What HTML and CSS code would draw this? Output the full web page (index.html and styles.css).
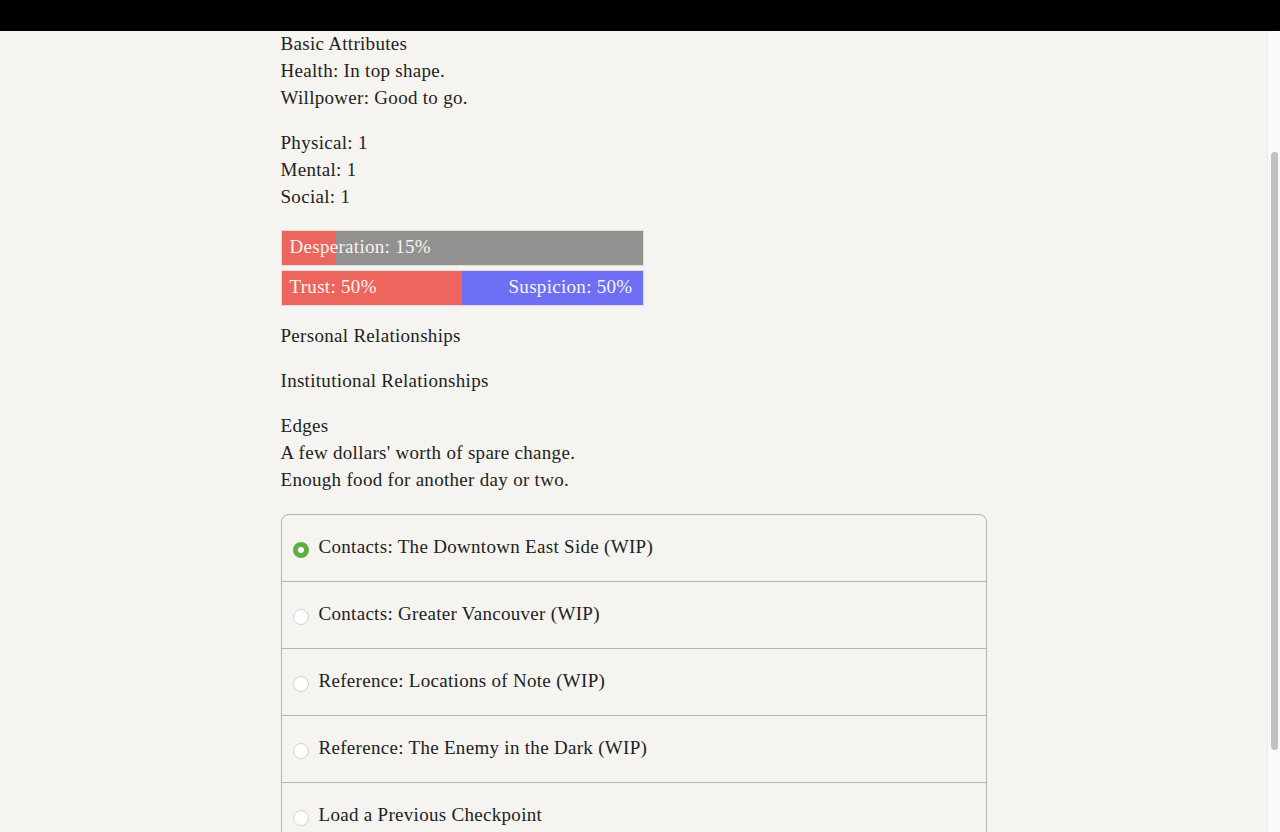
FILE: index.html
```html
<!DOCTYPE html>
<html lang="en">
<head>
<meta charset="utf-8">
<title>Character</title>
<link rel="stylesheet" href="styles.css">
</head>
<body>
<div class="topbar"></div>
<div class="app">
  <main class="viewport">
    <div class="column">
      <div class="block">
        <div class="line">Basic Attributes</div>
        <div class="line">Health: In top shape.</div>
        <div class="line">Willpower: Good to go.</div>
      </div>
      <div class="block">
        <div class="line">Physical: 1</div>
        <div class="line">Mental: 1</div>
        <div class="line">Social: 1</div>
      </div>
      <div class="bars">
        <div class="bar bar-grey">
          <div class="fill fill-red" style="width:15%"></div>
          <span class="bar-label">Desperation: 15%</span>
        </div>
        <div class="bar bar-blue">
          <div class="fill fill-red" style="width:50%"></div>
          <span class="bar-label">Trust: 50%</span>
          <span class="bar-label">Suspicion: 50%</span>
        </div>
      </div>
      <div class="block">
        <div class="line">Personal Relationships</div>
      </div>
      <div class="block">
        <div class="line">Institutional Relationships</div>
      </div>
      <div class="block">
        <div class="line">Edges</div>
        <div class="line">A few dollars' worth of spare change.</div>
        <div class="line">Enough food for another day or two.</div>
      </div>
      <div class="options">
        <div class="option">
          <span class="radio radio-on"></span>
          <span class="option-text">Contacts: The Downtown East Side (WIP)</span>
        </div>
        <div class="option">
          <span class="radio"></span>
          <span class="option-text">Contacts: Greater Vancouver (WIP)</span>
        </div>
        <div class="option">
          <span class="radio"></span>
          <span class="option-text">Reference: Locations of Note (WIP)</span>
        </div>
        <div class="option">
          <span class="radio"></span>
          <span class="option-text">Reference: The Enemy in the Dark (WIP)</span>
        </div>
        <div class="option">
          <span class="radio"></span>
          <span class="option-text">Load a Previous Checkpoint</span>
        </div>
      </div>
    </div>
  </main>
  <div class="scrollbar"><div class="thumb"></div></div>
</div>
</body>
</html>
```
FILE: styles.css
```css
html, body {
  margin: 0;
  padding: 0;
  height: 100%;
  overflow: hidden;
}
body {
  background: #f5f4f0;
  color: #222222;
  font-family: "Liberation Serif", "Times New Roman", serif;
  font-size: 19px;
  letter-spacing: 0.3px;
  display: flex;
  flex-direction: column;
}
.topbar {
  height: 31px;
  background: #000;
  flex: none;
}
.app {
  flex: 1;
  display: flex;
  min-height: 0;
}
.viewport {
  flex: 1;
  overflow: hidden;
}
.scrollbar {
  width: 6px;
  flex: none;
  background: #fafafa;
  border-left: 1px solid #ebebeb;
  padding: 121px 3px 0 3px;
}
.thumb {
  height: 598px;
  width: 7px;
  background: #c1c1c1;
  border-radius: 4px;
}
.column {
  width: 706px;
  margin: -1px auto 0;
  padding-bottom: 62px;
}
.block {
  margin-bottom: 18px;
}
.line {
  line-height: 27px;
}
.bars {
  display: flex;
  flex-direction: column;
  gap: 4px;
  width: 363px;
  margin-top: 20px;
  margin-bottom: 16px;
}
.bar {
  position: relative;
  height: 34px;
  border: 1px solid #dcdcdc;
  display: flex;
  align-items: center;
  justify-content: space-between;
  padding: 0 10px 0 8px;
  color: #f7f4f0;
}
.bar-grey { background: #929190; }
.bar-blue { background: #6f6ff5; }
.fill {
  position: absolute;
  left: 0;
  top: 0;
  bottom: 0;
}
.fill-red { background: #ec665e; }
.bar-label {
  position: relative;
  line-height: 27px;
  margin-bottom: 3px;
}
.options {
  margin-top: 21px;
  border: 1px solid #b3b3b3;
  border-radius: 8px;
}
.option {
  height: 66px;
  display: flex;
  align-items: center;
  padding-left: 11px;
  border-top: 1px solid #b3b3b3;
}
.option:first-child {
  border-top: none;
}
.radio {
  width: 14px;
  height: 14px;
  border-radius: 50%;
  border: 1px solid #d2d2d2;
  background: #ffffff;
  margin-right: 10px;
  margin-top: 3px;
  flex: none;
}
.radio-on {
  width: 6px;
  height: 6px;
  border: 5px solid #5fae42;
}
.option-text {
  line-height: 27px;
  margin-bottom: 4px;
}
```
